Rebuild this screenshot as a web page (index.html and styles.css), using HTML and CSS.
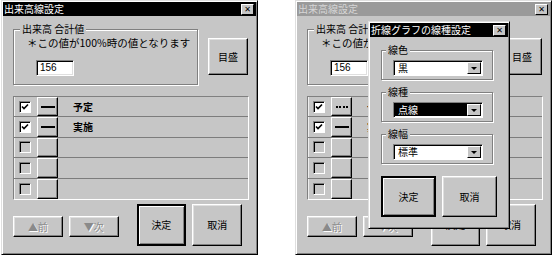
FILE: index.html
```html
<!DOCTYPE html>
<html lang="ja">
<head>
    <meta charset="UTF-8">
    <title>出来高線設定</title>
    <link rel="stylesheet" href="styles.css">
</head>
<body>
<div class="screen">

    <!-- left: active dialog -->
    <div class="dlg">
        <div class="titlebar">
            <span>出来高線設定</span>
            <span class="close">✕</span>
        </div>
        <div class="body">
            <div class="top">
                <div class="group total">
                    <span class="legend">出来高&nbsp;合計値</span>
                    <div class="note">＊この値が100%時の値となります</div>
                    <div class="field">156</div>
                </div>
                <div class="btn scale">目盛</div>
            </div>
            <div class="list">
                <div class="row">
                    <div class="cell-chk"><span class="chk on"><svg viewBox="0 0 10 10"><path d="M2 4.5 L4 6.5 L8 2.5" /></svg></span></div>
                    <div class="ls"><span class="stroke"></span></div>
                    <div class="label">予定</div>
                </div>
                <div class="row">
                    <div class="cell-chk"><span class="chk on"><svg viewBox="0 0 10 10"><path d="M2 4.5 L4 6.5 L8 2.5" /></svg></span></div>
                    <div class="ls"><span class="stroke"></span></div>
                    <div class="label">実施</div>
                </div>
                <div class="row">
                    <div class="cell-chk"><span class="chk"></span></div>
                    <div class="ls"></div>
                    <div class="label"></div>
                </div>
                <div class="row">
                    <div class="cell-chk"><span class="chk"></span></div>
                    <div class="ls"></div>
                    <div class="label"></div>
                </div>
                <div class="row">
                    <div class="cell-chk"><span class="chk"></span></div>
                    <div class="ls"></div>
                    <div class="label"></div>
                </div>
            </div>
            <div class="bottom">
                <div class="btn nav off">▲前</div>
                <div class="btn nav off">▼次</div>
                <div class="btn big default">決定</div>
                <div class="btn big">取消</div>
            </div>
        </div>
    </div>

    <!-- right: same dialog, inactive, behind the line style popup -->
    <div class="dlg inactive">
        <div class="titlebar">
            <span>出来高線設定</span>
            <span class="close">✕</span>
        </div>
        <div class="body">
            <div class="top">
                <div class="group total">
                    <span class="legend">出来高&nbsp;合計値</span>
                    <div class="note">＊この値が100%時の値となります</div>
                    <div class="field">156</div>
                </div>
                <div class="btn scale">目盛</div>
            </div>
            <div class="list">
                <div class="row">
                    <div class="cell-chk"><span class="chk on"><svg viewBox="0 0 10 10"><path d="M2 4.5 L4 6.5 L8 2.5" /></svg></span></div>
                    <div class="ls"><span class="stroke dotted"></span></div>
                    <div class="label">予定</div>
                </div>
                <div class="row">
                    <div class="cell-chk"><span class="chk on"><svg viewBox="0 0 10 10"><path d="M2 4.5 L4 6.5 L8 2.5" /></svg></span></div>
                    <div class="ls"><span class="stroke"></span></div>
                    <div class="label">実施</div>
                </div>
                <div class="row">
                    <div class="cell-chk"><span class="chk"></span></div>
                    <div class="ls"></div>
                    <div class="label"></div>
                </div>
                <div class="row">
                    <div class="cell-chk"><span class="chk"></span></div>
                    <div class="ls"></div>
                    <div class="label"></div>
                </div>
                <div class="row">
                    <div class="cell-chk"><span class="chk"></span></div>
                    <div class="ls"></div>
                    <div class="label"></div>
                </div>
            </div>
            <div class="bottom">
                <div class="btn nav off">▲前</div>
                <div class="btn nav off">▼次</div>
                <div class="btn big">決定</div>
                <div class="btn big">取消</div>
            </div>
        </div>
    </div>

    <!-- popup over the right dialog -->
    <div class="popup">
        <div class="titlebar">
            <span>折線グラフの線種設定</span>
            <span class="close">✕</span>
        </div>
        <div class="pbody">
            <div class="group pick">
                <span class="legend">線色</span>
                <div class="combo"><span class="val">黒</span><span class="arrow"></span></div>
            </div>
            <div class="group pick">
                <span class="legend">線種</span>
                <div class="combo"><span class="val sel">点線</span><span class="arrow"></span></div>
            </div>
            <div class="group pick">
                <span class="legend">線幅</span>
                <div class="combo"><span class="val">標準</span><span class="arrow"></span></div>
            </div>
            <div class="pbuttons">
                <div class="btn pbtn default">決定</div>
                <div class="btn pbtn">取消</div>
            </div>
        </div>
    </div>

</div>
</body>
</html>
```

FILE: styles.css
```css
* {
    box-sizing: border-box;
}

body {
    margin: 0;
    background: #fff;
    font-family: "Noto Sans CJK JP", sans-serif;
    font-size: 10px;
    color: #000;
}

.screen {
    position: relative;
    width: 556px;
    height: 256px;
    display: flex;
    gap: 37px;
    padding: 0 0 0 1px;
}

/* window frame */
.dlg,
.popup {
    background: #c6c6c6;
    border: 1px solid;
    border-color: #dfdfdf #000 #000 #dfdfdf;
    box-shadow: inset 1px 1px 0 #fff, inset -1px -1px 0 #808080;
    padding: 1px;
}

.dlg {
    width: 257px;
    height: 255px;
}

.titlebar {
    height: 14px;
    background: #000;
    color: #fff;
    display: flex;
    align-items: center;
    justify-content: space-between;
    padding: 0 2px 0 1px;
    line-height: 14px;
    font-size: 10px;
}

.inactive .titlebar {
    background: #9a9a9a;
    color: #d6d6d6;
}

.close {
    width: 13px;
    height: 11px;
    background: #c6c6c6;
    color: #000;
    border: 1px solid;
    border-color: #fff #000 #000 #fff;
    font-family: "DejaVu Sans", sans-serif;
    font-size: 8px;
    font-weight: bold;
    line-height: 9px;
    text-align: center;
}

.body {
    padding: 13px 8px 0 10px;
}

/* etched group box, caption sits on the top line */
.group {
    position: relative;
    border: 1px solid #808080;
    box-shadow: inset 1px 1px 0 #fff, 1px 1px 0 #fff;
}

.legend {
    position: absolute;
    top: -7px;
    left: 6px;
    padding: 0 2px;
    background: #c6c6c6;
    line-height: 12px;
    font-size: 10px;
}

.top {
    display: flex;
    align-items: flex-start;
}

.total {
    width: 186px;
    height: 56px;
    padding-top: 7px;
}

.note {
    margin-left: 13px;
    line-height: 12px;
    font-size: 10.5px;
}

.field {
    margin: 11px 0 0 22px;
    width: 38px;
    height: 16px;
    background: #fff;
    border: 1px solid;
    border-color: #808080 #fff #fff #808080;
    box-shadow: inset 1px 1px 0 #000, inset -1px -1px 0 #dfdfdf;
    padding: 0 3px;
    line-height: 14px;
    font-family: "Liberation Sans", sans-serif;
    font-size: 10px;
}

/* raised push button */
.btn {
    background: #c6c6c6;
    border: 1px solid;
    border-color: #fff #000 #000 #fff;
    box-shadow: inset -1px -1px 0 #808080, inset 1px 1px 0 #dfdfdf;
    display: flex;
    align-items: center;
    justify-content: center;
    font-size: 10px;
}

.btn.default {
    border: 2px solid #000;
    box-shadow: inset 1px 1px 0 #fff, inset -1px -1px 0 #808080;
}

.btn.off {
    color: #8a8a8a;
    text-shadow: 1px 1px 0 #fff;
}

.scale {
    width: 40px;
    height: 37px;
    margin: 9px 0 0 10px;
}

/* line list */
.list {
    margin-top: 11px;
    width: 236px;
    border: 1px solid;
    border-color: #808080 #fff #fff #808080;
}

.row {
    display: flex;
    height: 20.4px;
    border-bottom: 1px solid #7c7c7c;
}

.row:last-child {
    border-bottom: none;
}

.cell-chk {
    width: 23px;
    display: flex;
    align-items: center;
    padding-left: 4px;
    border-left: 1px solid #eee;
}

.chk {
    width: 12px;
    height: 12px;
    border: 1px solid;
    border-color: #808080 #fff #fff #808080;
    box-shadow: inset 1px 1px 0 #000;
    background: #c6c6c6;
    display: block;
}

.chk.on {
    background: #fff;
}

.chk svg {
    display: block;
    width: 10px;
    height: 10px;
}

.chk path {
    fill: none;
    stroke: #000;
    stroke-width: 1.6;
}

.ls {
    width: 21px;
    background: #c6c6c6;
    border: 1px solid;
    border-color: #fff #000 #000 #fff;
    box-shadow: inset -1px -1px 0 #808080;
    display: flex;
    align-items: center;
    justify-content: center;
}

.stroke {
    width: 14px;
    border-top: 2px solid #000;
}

.stroke.dotted {
    width: 12px;
    border-top-style: dotted;
}

.label {
    flex: 1;
    padding-left: 15px;
    line-height: 20px;
    font-weight: bold;
    font-size: 10px;
}

.bottom {
    display: flex;
    align-items: flex-start;
    margin-top: 4px;
}

.nav {
    width: 50px;
    height: 21px;
    margin-top: 12px;
    margin-right: 6px;
}

.nav + .nav {
    margin-right: 18px;
}

.big {
    width: 50px;
    height: 42px;
    margin-right: 6px;
}

/* line style popup */
.popup {
    position: absolute;
    left: 368px;
    top: 21px;
    width: 142px;
    height: 208px;
}

.pbody {
    padding: 13px 0 0 11px;
}

.pick {
    width: 112px;
    height: 30px;
    margin-bottom: 12px;
    padding-top: 9px;
}

.pick .legend {
    left: 4px;
}

.combo {
    margin-left: 11px;
    width: 90px;
    height: 16px;
    display: flex;
    background: #fff;
    border: 1px solid;
    border-color: #808080 #fff #fff #808080;
    box-shadow: inset 1px 1px 0 #000;
    padding: 1px;
}

.val {
    flex: 1;
    padding-left: 3px;
    line-height: 12px;
}

.val.sel {
    background: #000;
    color: #fff;
}

.arrow {
    width: 14px;
    background: #c6c6c6;
    border: 1px solid;
    border-color: #fff #000 #000 #fff;
    position: relative;
}

.arrow::after {
    content: "";
    position: absolute;
    left: 3px;
    top: 4px;
    border-left: 3px solid transparent;
    border-right: 3px solid transparent;
    border-top: 3px solid #000;
}

.pbuttons {
    display: flex;
    gap: 6px;
    margin-top: 2px;
}

.pbtn {
    width: 55px;
    height: 41px;
}
```
